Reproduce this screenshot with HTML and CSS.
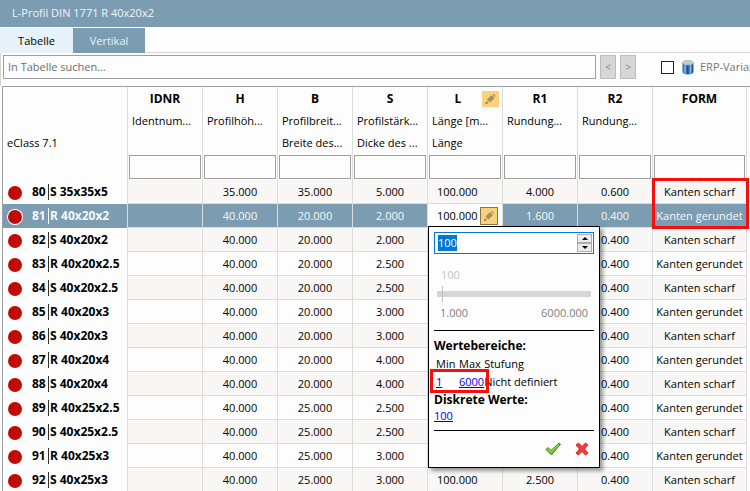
FILE: index.html
```html
<!DOCTYPE html>
<html lang="de">

<head>
    <meta charset="UTF-8">
    <meta name="viewport" content="width=device-width, initial-scale=1.0">
    <title>L-Profil DIN 1771 R 40x20x2</title>
    <link rel="stylesheet" href="styles.css">
</head>

<body>
    <svg class="defs" width="0" height="0">
        <symbol id="pencil" viewBox="0 0 12 12">
            <path d="M2.500 6.500 7 2 10 5 5.500 9.500z" fill="#a8905a" />
            <path d="M8 1.500 9 .8 11.200 3 10.500 4z" fill="#b58a55" />
            <path d="M.8 11.200 2 8 4 10z" fill="#8a7a50" />
        </symbol>
    </svg>

    <header class="title">L-Profil DIN 1771 R 40x20x2</header>

    <nav class="tabs">
        <button class="tab active">Tabelle</button>
        <button class="tab">Vertikal</button>
        <span class="tabs-line"></span>
    </nav>

    <div class="toolbar">
        <input class="search" type="text" placeholder="In Tabelle suchen..." aria-label="In Tabelle suchen">
        <button class="step" disabled>&lt;</button>
        <button class="step" disabled>&gt;</button>
        <label class="erp">
            <input type="checkbox">
            <svg width="12" height="15" viewBox="0 0 12 15">
                <path d="M.5 3v9c0 1.400 2.500 2.500 5.500 2.500s5.500-1.100 5.500-2.500V3z" fill="#2f6fb5" />
                <path d="M3 4v9.500M8.500 4v9.500" stroke="#8fc0e8" stroke-width="1.500" />
                <path d="M5.700 5v9M10.500 4v8.500" stroke="#1d4f8f" />
                <ellipse cx="6" cy="2.800" rx="5.500" ry="2.300" fill="#b9cfdd" stroke="#8aa9bf" stroke-width=".6" />
            </svg>
            <span>ERP-Varianten</span>
        </label>
    </div>

    <main class="grid">
        <table>
            <colgroup>
                <col class="c-name">
                <col class="c-val" span="7">
                <col class="c-form">
                <col>
            </colgroup>
            <thead>
                <tr class="names">
                    <th></th>
                    <th>IDNR</th>
                    <th>H</th>
                    <th>B</th>
                    <th>S</th>
                    <th class="editable">L<span class="mark"><svg width="13" height="12"><use href="#pencil" /></svg></span></th>
                    <th>R1</th>
                    <th>R2</th>
                    <th>FORM</th>
                    <th></th>
                </tr>
                <tr class="desc">
                    <td></td>
                    <td>Identnum...</td>
                    <td>Profilhöh...</td>
                    <td>Profilbreit...</td>
                    <td>Profilstärk...</td>
                    <td>Länge [m...</td>
                    <td>Rundung...</td>
                    <td>Rundung...</td>
                    <td></td>
                    <td></td>
                </tr>
                <tr class="desc">
                    <td>eClass 7.1</td>
                    <td></td>
                    <td></td>
                    <td>Breite des...</td>
                    <td>Dicke des ...</td>
                    <td>Länge</td>
                    <td></td>
                    <td></td>
                    <td></td>
                    <td></td>
                </tr>
                <tr class="filter">
                    <td></td>
                    <td><input type="text" aria-label="Filter IDNR"></td>
                    <td><input type="text" aria-label="Filter H"></td>
                    <td><input type="text" aria-label="Filter B"></td>
                    <td><input type="text" aria-label="Filter S"></td>
                    <td><input type="text" aria-label="Filter L"></td>
                    <td><input type="text" aria-label="Filter R1"></td>
                    <td><input type="text" aria-label="Filter R2"></td>
                    <td><input type="text" aria-label="Filter FORM"></td>
                    <td></td>
                </tr>
            </thead>
            <tbody>
                <tr>
                    <th><i class="dot"></i><span class="nr">80</span>S 35x35x5</th>
                    <td></td><td>35.000</td><td>35.000</td><td>5.000</td><td class="len">100.000</td><td>4.000</td><td>0.600</td>
                    <td class="form-cell">Kanten scharf<span class="frame frame-form"></span></td><td></td>
                </tr>
                <tr class="selected">
                    <th><i class="dot"></i><span class="nr">81</span>R 40x20x2</th>
                    <td></td><td>40.000</td><td>20.000</td><td>2.000</td>
                    <td class="len editing">
                        <div class="edit-row">100.000
                            <button class="edit" aria-label="Bearbeiten"><svg width="12" height="12"><use href="#pencil" /></svg></button>
                        </div>
                        <div class="popup">
                            <div class="spin">
                                <input id="value" type="text" value="100" aria-label="Länge">
                                <div class="arrows">
                                    <button aria-label="Mehr"><svg width="6" height="3"><path d="M0 3 3 0 6 3z" /></svg></button>
                                    <button aria-label="Weniger"><svg width="6" height="3"><path d="M0 0h6L3 3z" /></svg></button>
                                </div>
                            </div>
                            <div class="slider">
                                <label for="range">100</label>
                                <input id="range" type="range" min="1" max="6000" value="200" disabled>
                                <div class="limits"><span>1.000</span><span>6000.000</span></div>
                            </div>
                            <div class="ranges">
                                <b>Wertebereiche:</b>
                                <table class="stufen">
                                    <tr><td>Min</td><td>Max</td><td>Stufung</td></tr>
                                    <tr><td><a href="#">1</a></td><td><a href="#">6000</a></td><td>Nicht definiert</td></tr>
                                </table>
                                <b>Diskrete Werte:</b>
                                <a class="discrete" href="#">100</a>
                                <span class="frame frame-range"></span>
                            </div>
                            <div class="actions">
                                <button aria-label="Übernehmen">
                                    <svg width="16" height="14" viewBox="0 0 16 14"><path d="M1 7.500 3 5.500 6 8.500 14 1l1.500 1.200L6.500 13z" fill="#6dbf2e" stroke="#3f8f1c" /><path d="M3 7l3 3L13.500 2.700" fill="none" stroke="#a6e070" /></svg>
                                </button>
                                <button aria-label="Abbrechen">
                                    <svg width="14" height="14" viewBox="0 0 14 14"><path d="M1 3 3.500 1 7 4.500 10.500 1 13 3 9.500 7l3.500 4-2.500 2L7 9.500 3.500 13 1 11l3.500-4z" fill="#f23a36" stroke="#d92a2a" /></svg>
                                </button>
                            </div>
                        </div>
                    </td>
                    <td>1.600</td><td>0.400</td><td>Kanten gerundet</td><td></td>
                </tr>
                <tr>
                    <th><i class="dot"></i><span class="nr">82</span>S 40x20x2</th>
                    <td></td><td>40.000</td><td>20.000</td><td>2.000</td><td></td><td></td><td>0.400</td><td>Kanten scharf</td><td></td>
                </tr>
                <tr>
                    <th><i class="dot"></i><span class="nr">83</span>R 40x20x2.5</th>
                    <td></td><td>40.000</td><td>20.000</td><td>2.500</td><td></td><td></td><td>0.400</td><td>Kanten gerundet</td><td></td>
                </tr>
                <tr>
                    <th><i class="dot"></i><span class="nr">84</span>S 40x20x2.5</th>
                    <td></td><td>40.000</td><td>20.000</td><td>2.500</td><td></td><td></td><td>0.400</td><td>Kanten scharf</td><td></td>
                </tr>
                <tr>
                    <th><i class="dot"></i><span class="nr">85</span>R 40x20x3</th>
                    <td></td><td>40.000</td><td>20.000</td><td>3.000</td><td></td><td></td><td>0.400</td><td>Kanten gerundet</td><td></td>
                </tr>
                <tr>
                    <th><i class="dot"></i><span class="nr">86</span>S 40x20x3</th>
                    <td></td><td>40.000</td><td>20.000</td><td>3.000</td><td></td><td></td><td>0.400</td><td>Kanten scharf</td><td></td>
                </tr>
                <tr>
                    <th><i class="dot"></i><span class="nr">87</span>R 40x20x4</th>
                    <td></td><td>40.000</td><td>20.000</td><td>4.000</td><td></td><td></td><td>0.400</td><td>Kanten gerundet</td><td></td>
                </tr>
                <tr>
                    <th><i class="dot"></i><span class="nr">88</span>S 40x20x4</th>
                    <td></td><td>40.000</td><td>20.000</td><td>4.000</td><td></td><td></td><td>0.400</td><td>Kanten scharf</td><td></td>
                </tr>
                <tr>
                    <th><i class="dot"></i><span class="nr">89</span>R 40x25x2.5</th>
                    <td></td><td>40.000</td><td>25.000</td><td>2.500</td><td></td><td></td><td>0.400</td><td>Kanten gerundet</td><td></td>
                </tr>
                <tr>
                    <th><i class="dot"></i><span class="nr">90</span>S 40x25x2.5</th>
                    <td></td><td>40.000</td><td>25.000</td><td>2.500</td><td></td><td></td><td>0.400</td><td>Kanten scharf</td><td></td>
                </tr>
                <tr>
                    <th><i class="dot"></i><span class="nr">91</span>R 40x25x3</th>
                    <td></td><td>40.000</td><td>25.000</td><td>3.000</td><td></td><td></td><td>0.400</td><td>Kanten gerundet</td><td></td>
                </tr>
                <tr>
                    <th><i class="dot"></i><span class="nr">92</span>S 40x25x3</th>
                    <td></td><td>40.000</td><td>25.000</td><td>3.000</td><td class="len">100.000</td><td>2.500</td><td>0.400</td><td>Kanten scharf</td><td></td>
                </tr>
            </tbody>
        </table>
    </main>

    <script>
        const value = document.getElementById('value');
        value.focus({ preventScroll: true });
        value.select();
    </script>
</body>

</html>
```
FILE: styles.css
```css
* {
    box-sizing: border-box;
}

body {
    margin: 0;
    height: 100vh;
    overflow: hidden;
    display: flex;
    flex-direction: column;
    background-color: #fdfdfd;
    color: #000;
    font-family: "Open Sans", "Noto Sans", sans-serif;
    font-size: 11px;
    line-height: 16px;
}

button,
input {
    font: inherit;
    color: inherit;
    margin: 0;
    padding: 0;
}

svg {
    display: block;
}

.defs {
    position: absolute;
}

.title {
    flex: none;
    height: 27px;
    padding: 5px 12px;
    background-color: #7b9cb1;
    color: #f0f6fa;
}

/* tabs */
.tabs {
    flex: none;
    display: flex;
    height: 26px;
    padding-top: 1px;
}

.tab {
    width: 72px;
    border: none;
    background-color: #7b9cb1;
    color: #e8f1f6;
}

.tab.active {
    width: 73px;
    background-color: #e6f2f9;
    color: #000;
}

.tabs-line {
    flex: 1;
    border-bottom: 1px solid #d5d5d5;
}

/* search bar */
.toolbar {
    flex: none;
    display: flex;
    height: 33px;
    padding: 2px 0 7px 2px;
    border-left: 1px solid #d5d5d5;
    overflow: hidden;
}

.search {
    flex: 1;
    min-width: 100px;
    padding: 0 4px;
    border: 1px solid #a0a0a0;
    background-color: #fdfdfd;
}

.search::placeholder {
    color: #6d6d6d;
}

.step {
    width: 16px;
    margin-left: 4px;
    border: 1px solid #bdbdbd;
    background-color: #d6d6d6;
    color: #8a8a8a;
    font-size: 10px;
}

.erp {
    flex: none;
    display: flex;
    align-items: center;
    width: 114px;
    padding-left: 25px;
    color: #777;
    white-space: nowrap;
}

.erp input {
    flex: none;
    appearance: none;
    width: 13px;
    height: 13px;
    border: 1px solid #222;
    background-color: #fff;
}

.erp svg {
    flex: none;
    margin: 0 6px 0 8px;
}

/* table */
.grid {
    flex: 1;
    min-height: 0;
    margin-left: 2px;
    border-top: 1px solid #a0a0a0;
    border-left: 1px solid #a0a0a0;
    overflow: hidden;
}

.grid > table {
    width: 100%;
    table-layout: fixed;
    border-spacing: 0;
}

.c-name {
    width: 125px;
}

.c-val {
    width: 75px;
}

.c-form {
    width: 94px;
}

.grid th,
.grid td {
    padding: 0;
    white-space: nowrap;
}

.grid > table > thead th,
.grid > table > thead td,
.grid > table > tbody > tr > * {
    border-right: 1px solid #dcdcdc;
}

.grid tr > :last-child {
    border-right: none;
}

.names th {
    height: 23px;
    font-size: 12px;
}

.names .editable {
    position: relative;
    padding-right: 14px;
}

.mark {
    position: absolute;
    top: 4px;
    right: 3px;
    padding: 2px;
    background-color: #fbd27c;
}

.grid .desc td {
    height: 22px;
    padding-left: 4px;
}

.grid .filter td {
    height: 26px;
    padding: 1px;
}

.filter input {
    display: block;
    width: 100%;
    height: 24px;
    border: 1px solid #a0a0a0;
    background-color: #fdfdfd;
}

.grid > table > tbody > tr > td {
    height: 24px;
    border-bottom: 1px solid #dcdcdc;
    text-align: center;
}

.grid > table > tbody > tr > td:last-child {
    border-bottom: none;
}

.grid > table > tbody > tr:nth-child(odd) > td:not(:last-child) {
    background-color: #f8f7f5;
}

.grid > table > tbody > tr > th {
    padding-left: 5px;
    font-size: 12px;
    text-align: left;
}

.dot {
    display: inline-block;
    width: 14px;
    height: 14px;
    margin-right: 10px;
    border-radius: 50%;
    background-color: #c00a08;
    vertical-align: text-bottom;
}

.nr {
    display: inline-block;
    width: 17px;
    margin-right: 1px;
    border-right: 1px solid #333;
}

.grid > table > tbody > tr > .len {
    padding-left: 9px;
    text-align: left;
}

.grid > table > tbody > .selected > *:not(:last-child) {
    background-color: #7b9cb1;
    color: #f5f9fb;
}

.selected .dot {
    box-shadow: 0 0 0 1px #fff;
}

.selected .nr {
    border-color: #fff;
}

.grid > table > tbody > .selected > .editing:not(:last-child) {
    position: relative;
    background-color: #fff;
    color: #000;
}

.edit-row {
    display: flex;
    align-items: center;
    justify-content: space-between;
    height: 18px;
    padding-right: 4px;
}

.edit {
    padding: 2px;
    border: 1px solid #85764f;
    background-color: #fbd27c;
}

/* editor popup */
.popup {
    position: absolute;
    top: 22px;
    left: 0;
    z-index: 1;
    width: 172px;
    padding: 5px;
    border: 1px solid #000;
    background-color: #fdfdfd;
    box-shadow: 3px 3px 4px rgba(0, 0, 0, 0.4);
}

.spin {
    display: flex;
    height: 22px;
    padding: 1px;
    border: 1px solid #0078d7;
    background-color: #fff;
}

.spin input {
    flex: 1;
    min-width: 0;
    padding-left: 2px;
    border: none;
    outline: none;
    caret-color: transparent;
}

.spin input::selection {
    background-color: #0078d7;
    color: #fff;
}

.arrows {
    display: flex;
    flex-direction: column;
    width: 15px;
}

.arrows button {
    flex: 1;
    display: flex;
    align-items: center;
    justify-content: center;
    border: 1px solid #adadad;
    background-color: #ececec;
}

.slider {
    padding: 13px 3px 9px;
    border-bottom: 1px solid #000;
    color: #808080;
}

.slider label {
    display: block;
    padding-left: 4px;
    color: #c4c4c4;
}

.slider input {
    appearance: none;
    display: block;
    width: 100%;
    height: 22px;
    background: none;
}

.slider input::-webkit-slider-runnable-track {
    height: 6px;
    background-color: #d6d6d6;
}

.slider input::-webkit-slider-thumb {
    appearance: none;
    width: 1px;
    height: 16px;
    margin-top: -5px;
    background-color: #c0c0c0;
}

.limits {
    display: flex;
    justify-content: space-between;
    padding: 0 3px;
}

.ranges {
    position: relative;
    padding: 6px 0 7px;
    border-bottom: 1px solid #000;
}

.ranges b {
    display: block;
    font-size: 12px;
    line-height: 18px;
}

.stufen {
    border-spacing: 0;
}

.stufen td {
    height: 18px;
}

.stufen td:first-child {
    width: 25px;
    padding-left: 2px;
}

.popup a {
    color: #0000ee;
}

.discrete {
    display: block;
    line-height: 14px;
}

.actions {
    display: flex;
    justify-content: flex-end;
    gap: 14px;
    padding: 11px 5px 6px;
}

.actions button {
    border: none;
    background: none;
}

/* red highlight frames */
.frame {
    position: absolute;
    border: 3px solid #f80d0d;
    pointer-events: none;
}

.form-cell {
    position: relative;
}

.frame-form {
    top: -2px;
    left: -1px;
    width: 97px;
    height: 51px;
}

.frame-range {
    top: 38px;
    left: -4px;
    width: 59px;
    height: 24px;
}
```
